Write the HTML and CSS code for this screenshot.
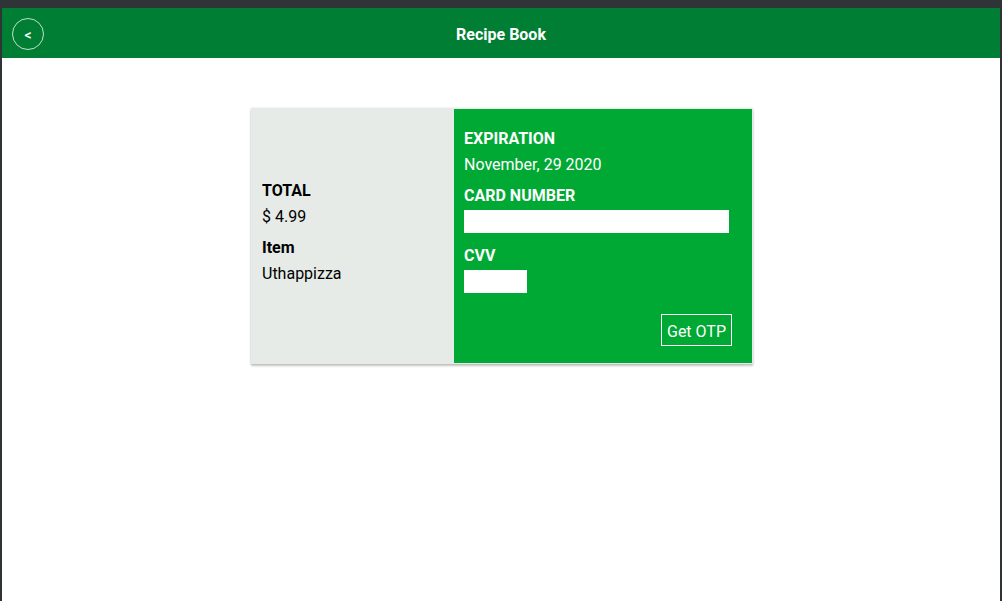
FILE: index.html
```html
<!DOCTYPE html>
<html>
<head>
<meta charset="utf-8">
<title>Recipe Book</title>
<link rel="stylesheet" href="styles.css">
</head>
<body>
<div class="page">
  <header class="topbar">
    <button class="back">&lt;</button>
    <h1 class="title">Recipe Book</h1>
  </header>
  <main class="content">
    <section class="card">
      <div class="summary">
        <div class="label">TOTAL</div>
        <div class="value">$ 4.99</div>
        <div class="label">Item</div>
        <div class="value">Uthappizza</div>
      </div>
      <div class="payment">
        <div class="label">EXPIRATION</div>
        <div class="value">November, 29 2020</div>
        <div class="label">CARD NUMBER</div>
        <input class="field field-card" type="text">
        <div class="label label-cvv">CVV</div>
        <input class="field field-cvv" type="text">
        <div class="actions">
          <button class="otp">Get OTP</button>
        </div>
      </div>
    </section>
  </main>
</div>
</body>
</html>
```
FILE: styles.css
```css
html, body {
  margin: 0;
  height: 100%;
}
body {
  background: #2f3437;
  padding: 8px 2px 0 2px;
  box-sizing: border-box;
  font-family: Roboto, "Liberation Sans", sans-serif;
  font-size: 16px;
}
.page {
  background: #ffffff;
  height: 100%;
}
.topbar {
  height: 50px;
  background: #007e33;
  display: flex;
  align-items: center;
  position: relative;
  padding-left: 10px;
}
.back {
  width: 32px;
  height: 32px;
  border-radius: 50%;
  border: 1px solid rgba(255,255,255,0.75);
  background: transparent;
  color: #fff;
  font-family: Roboto, sans-serif;
  font-size: 14px;
  font-weight: 500;
  padding: 2px 0 0 0;
  margin: 2px 0 0 0;
  line-height: 28px;
  box-sizing: border-box;
}
.title {
  position: absolute;
  left: 0;
  right: 0;
  top: 2px;
  margin: 0;
  text-align: center;
  line-height: 50px;
  font-size: 16px;
  font-weight: 700;
  color: #fff;
  pointer-events: none;
}
.content {
  padding-top: 50px;
}
.card {
  width: 502px;
  margin: 0 auto;
  display: flex;
  background: #e6ebe8;
  padding: 1px 1px 1px 0;
  box-sizing: border-box;
  box-shadow: 0 2px 2px rgba(0,0,0,0.22), 0 0 2px rgba(0,0,0,0.12);
  position: relative;
  left: 1px;
}
.summary {
  width: 203px;
  padding: 70px 0 0 11px;
  box-sizing: border-box;
  color: #000;
}
.label {
  font-weight: 700;
  line-height: 24px;
}
.value {
  line-height: 24px;
  margin-top: 2px;
  margin-bottom: 7px;
}
.payment {
  width: 298px;
  background: #00a934;
  color: #fff;
  padding: 18px 20px 17px 10px;
  box-sizing: border-box;
  display: flex;
  flex-direction: column;
}
.field {
  border: none;
  background: #fff;
  height: 23px;
  padding: 0;
  margin: 2px 0 0 0;
  display: block;
  box-sizing: border-box;
  outline: none;
}
.field-card {
  width: 265px;
}
.label-cvv {
  margin-top: 11px;
}
.field-cvv {
  width: 63px;
  margin-top: 2px;
}
.actions {
  display: flex;
  justify-content: flex-end;
  margin-top: 21px;
}
.otp {
  height: 32px;
  width: 71px;
  border: 1px solid #fff;
  background: transparent;
  color: #fff;
  font-family: Roboto, sans-serif;
  font-size: 16px;
  padding: 2px 0 0 0;
}
```
